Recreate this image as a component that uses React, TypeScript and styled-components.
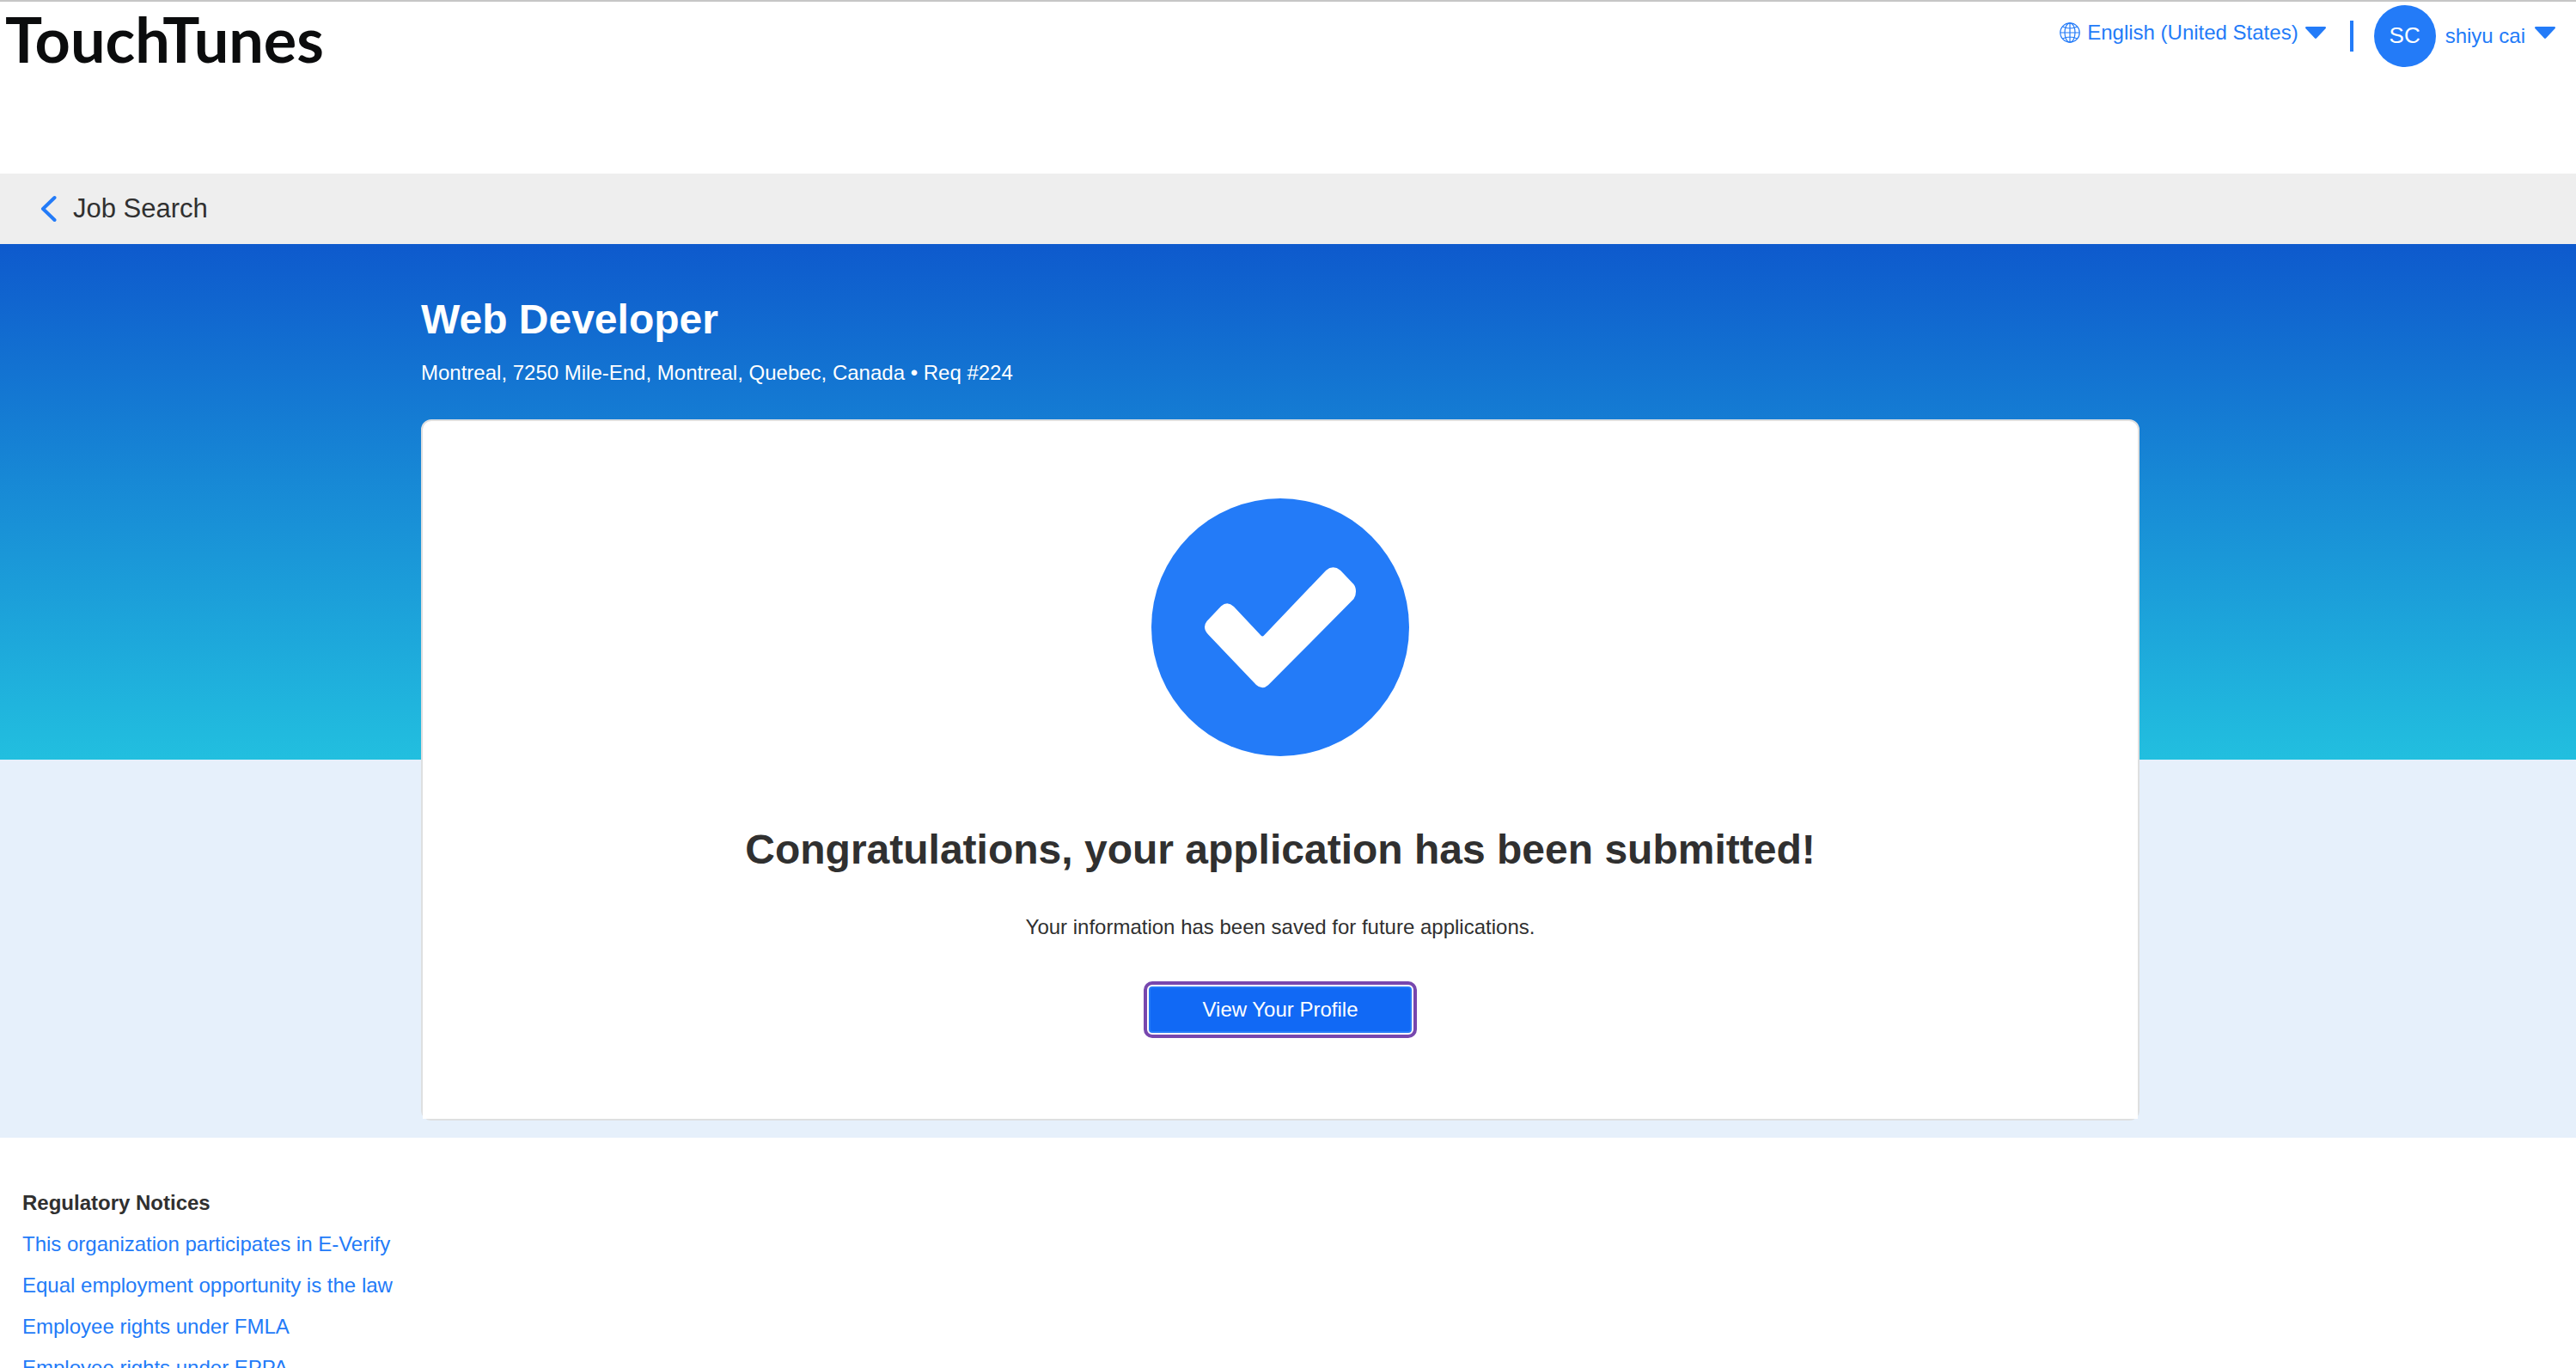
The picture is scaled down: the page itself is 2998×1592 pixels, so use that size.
import React from "react";
import styled, { createGlobalStyle } from "styled-components";

const colors = {
  link: "#237bf8",
  button: "#1169f5",
  focus: "#7747ae",
  text: "#303030",
  bar: "#eeeeee",
  band: "#e6f0fb",
  border: "#dedfe0",
};

const GlobalStyle = createGlobalStyle`
  * { box-sizing: border-box; }
  body {
    margin: 0;
    background: #fff;
    color: ${colors.text};
    font-family: "Liberation Sans", Arial, Helvetica, sans-serif;
    font-size: 24px;
    line-height: 32px;
  }
  h1, h2, h3, p, ul { margin: 0; padding: 0; }
  button, select { font: inherit; }
  svg { display: block; flex: none; }
`;

const Header = styled.header`
  display: flex;
  justify-content: space-between;
  align-items: flex-start;
  min-height: 202px;
  padding: 0 24px 0 6px;
  border-top: 2px solid #c6c6c6;
`;

const Logo = styled.a`
  color: #0b0c0d;
  font-family: Lato, "Open Sans", sans-serif;
  font-size: 72px;
  font-weight: 700;
  line-height: 86px;
  text-decoration: none;
`;

const Tools = styled.div`
  display: flex;
  align-items: flex-start;
  padding-top: 4px;
`;

const Language = styled.label`
  display: flex;
  align-items: center;
  gap: 8px;
  padding-top: 16px;
  color: ${colors.link};
`;

const LanguageSelect = styled.select`
  appearance: none;
  field-sizing: content;
  height: 32px;
  margin: 0;
  padding: 0;
  border: 0;
  background: transparent;
  color: inherit;
`;

const Divider = styled.span`
  width: 4px;
  height: 36px;
  margin: 18px 24px 0 28px;
  background: ${colors.link};
`;

const UserMenu = styled.button`
  display: flex;
  align-items: center;
  gap: 11px;
  padding: 0;
  border: 0;
  background: transparent;
  color: ${colors.link};
  cursor: pointer;
`;

const Avatar = styled.span`
  display: grid;
  place-items: center;
  width: 72px;
  height: 72px;
  padding-bottom: 2px;
  border-radius: 50%;
  background: ${colors.link};
  color: #fff;
  font-size: 26px;
`;

const CaretSlot = styled.span`
  padding-bottom: 8px;
`;

const BackBar = styled.nav`
  display: flex;
  align-items: center;
  height: 82px;
  padding: 0 46px;
  background: ${colors.bar};
`;

const BackLink = styled.a`
  display: flex;
  align-items: center;
  gap: 18px;
  color: ${colors.text};
  font-size: 31px;
  line-height: 40px;
  text-decoration: none;
`;

const Hero = styled.main`
  padding: 60px 18px 20px 0;
  background: linear-gradient(#0e5acd, #22bfdf) no-repeat top / 100% 600px ${colors.band};
`;

const Container = styled.div`
  max-width: 2000px;
  margin: 0 auto;
`;

const Heading = styled.h1`
  color: #fff;
  font-size: 48px;
  line-height: 56px;
`;

const Location = styled.p`
  margin-top: 18px;
  color: #fff;
`;

const Card = styled.section`
  margin-top: 38px;
  border: 2px solid ${colors.border};
  border-radius: 12px;
  background: ${colors.border};
`;

const CardBody = styled.div`
  display: flex;
  flex-direction: column;
  align-items: center;
  padding: 90px 40px 100px;
  border-radius: 10px 10px 0 0;
  background: #fff;
  text-align: center;
`;

const Message = styled.h2`
  margin-top: 81px;
  font-size: 48px;
  line-height: 56px;
`;

const Note = styled.p`
  margin-top: 46px;
`;

const ProfileButton = styled.button`
  min-width: 306px;
  height: 54px;
  margin-top: 53px;
  padding: 0 60px;
  border: 2px solid ${colors.link};
  border-radius: 4px;
  outline: 4px solid ${colors.focus};
  outline-offset: 2px;
  background: ${colors.button};
  color: #fff;
  cursor: pointer;
`;

const Footer = styled.footer`
  padding: 60px 26px;
`;

const FooterTitle = styled.h3`
  font-size: 24px;
`;

const NoticeList = styled.ul`
  list-style: none;
`;

const Notice = styled.li`
  margin-top: 16px;
`;

const NoticeLink = styled.a`
  color: ${colors.link};
  text-decoration: none;
`;

const notices = [
  "This organization participates in E-Verify",
  "Equal employment opportunity is the law",
  "Employee rights under FMLA",
  "Employee rights under EPPA",
];

function Globe() {
  return (
    <svg width="24" height="24" viewBox="0 0 24 24" fill="none" stroke="currentColor" strokeWidth="1.2" aria-hidden="true">
      <circle cx="12" cy="12" r="11.2" />
      <ellipse cx="12" cy="12" rx="6" ry="11.2" />
      <path d="M12 .8v22.4M.8 12h22.4M3.5 5q8.500 4 17 0M3.500 19q8.500-4 17 0" />
    </svg>
  );
}

function Caret() {
  return (
    <svg width="24" height="14" viewBox="0 0 24 14" fill="currentColor" aria-hidden="true">
      <path d="M1.500 0h21q1.500 0 1.500 1.200 0 .5-.5 1L13.200 13.300q-1.200 1.200-2.400 0L.5 2.200Q0 1.700 0 1.200 0 0 1.500 0z" />
    </svg>
  );
}

function BackChevron() {
  return (
    <svg width="21" height="32" viewBox="0 0 21 32" fill="none" stroke={colors.link} strokeWidth="4" strokeLinecap="round" strokeLinejoin="round" aria-hidden="true">
      <path d="M17.500 3 4 16l13.500 13" />
    </svg>
  );
}

function SuccessMark() {
  return (
    <svg width="300" height="300" viewBox="0 0 300 300" aria-hidden="true">
      <circle cx="150" cy="150" r="150" fill={colors.link} />
      <path
        fill="#fff"
        d="M66 158.300 122 217Q129 223.500 136 217.300L235.500 117Q238 113.500 238 108.500 238 103 235.500 100L220 83.700Q211.500 77 203.300 83.700L131 159.500Q129.300 161.500 127.500 159.500L96 126Q88.500 119 81.300 125.300L64.700 142.700Q62 146 62 149.500 62 154 66 158.300Z"
      />
    </svg>
  );
}

export default function App() {
  return (
    <>
      <GlobalStyle />
      <Header>
        <Logo href="#">TouchTunes</Logo>
        <Tools>
          <Language>
            <Globe />
            <LanguageSelect aria-label="Language" defaultValue="en-US">
              <option value="en-US">English (United States)</option>
            </LanguageSelect>
            <Caret />
          </Language>
          <Divider />
          <UserMenu type="button">
            <Avatar>SC</Avatar>
            shiyu cai
            <CaretSlot>
              <Caret />
            </CaretSlot>
          </UserMenu>
        </Tools>
      </Header>
      <BackBar>
        <BackLink href="#">
          <BackChevron />
          Job Search
        </BackLink>
      </BackBar>
      <Hero>
        <Container>
          <Heading>Web Developer</Heading>
          <Location>Montreal, 7250 Mile-End, Montreal, Quebec, Canada • Req #224</Location>
          <Card>
            <CardBody>
              <SuccessMark />
              <Message>Congratulations, your application has been submitted!</Message>
              <Note>Your information has been saved for future applications.</Note>
              <ProfileButton type="button">View Your Profile</ProfileButton>
            </CardBody>
          </Card>
        </Container>
      </Hero>
      <Footer>
        <FooterTitle>Regulatory Notices</FooterTitle>
        <NoticeList>
          {notices.map((notice) => (
            <Notice key={notice}>
              <NoticeLink href="#">{notice}</NoticeLink>
            </Notice>
          ))}
        </NoticeList>
      </Footer>
    </>
  );
}
